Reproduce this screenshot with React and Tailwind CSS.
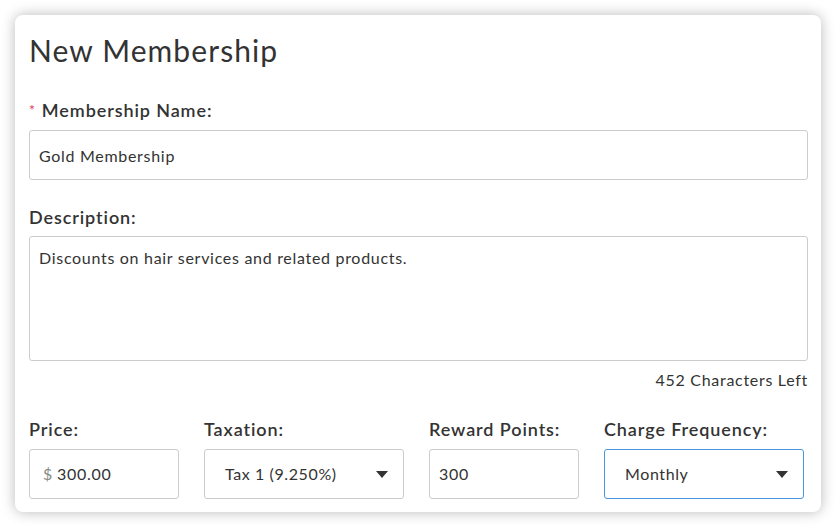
import { useState } from "react";

const Label = ({ children, required, className = "" }) => (
  <div className={`text-[18px] leading-6 font-semibold tracking-[0.9px] text-[#333] ${className}`}>
    {required && <span className="text-[#e0506b] text-[14px] align-top mr-1.5">*</span>}
    {children}
  </div>
);

const Caret = () => (
  <svg width="12" height="7" viewBox="0 0 12 7" className="shrink-0">
    <path d="M0 0 L12 0 L6 7 Z" fill="#333" />
  </svg>
);

const SelectBox = ({ value, focused }) => (
  <div
    className={`h-[50px] w-[200px] rounded-[3px] border bg-white flex items-center justify-between pl-5 pr-[15px] text-[16px] tracking-[0.6px] text-[#333] ${
      focused ? "border-[#4a95e0]" : "border-[#cccccc]"
    }`}
  >
    <span>{value}</span>
    <Caret />
  </div>
);

export default function App() {
  const [name, setName] = useState("Gold Membership");
  const [desc, setDesc] = useState("Discounts on hair services and related products.");

  return (
    <div className="w-[836px] h-[527px] bg-white pt-[15px] pl-[15px]" style={{ fontFamily: "Lato, 'Open Sans', sans-serif" }}>
      <div className="w-[806px] h-[497px] rounded-lg bg-white shadow-[0_0_14px_rgba(0,0,0,0.28)] px-[14px] pt-[17px] pb-[13px]">
        <h1 className="text-[30px] leading-9 font-normal text-[#333] tracking-[1.1px]">New Membership</h1>

        <Label required className="mt-[30px]">Membership Name:</Label>
        <input
          value={name}
          onChange={(e) => setName(e.target.value)}
          className="mt-2 block w-[779px] h-[50px] rounded-[3px] border border-[#cccccc] px-[9px] text-[16px] tracking-[0.7px] text-[#333] outline-none"
        />

        <Label className="mt-[25px]">Description:</Label>
        <textarea
          value={desc}
          onChange={(e) => setDesc(e.target.value)}
          className="mt-[7px] block w-[779px] h-[125px] resize-none rounded-[3px] border border-[#cccccc] px-[9px] py-[11px] text-[16px] leading-5 tracking-[0.7px] text-[#333] outline-none"
        />
        <div className="mt-[9px] w-[779px] text-right text-[16px] leading-5 tracking-[0.7px] text-[#333]">452 Characters Left</div>

        {/* bottom row */}
        <div className="mt-[27px] flex gap-[25px]">
          <div>
            <Label>Price:</Label>
            <div className="mt-2 h-[50px] w-[150px] rounded-[3px] border border-[#cccccc] flex items-center pl-[13px] text-[16px] tracking-[0.7px] text-[#333]">
              <span className="text-[#888] mr-1">$</span>
              300.00
            </div>
          </div>
          <div>
            <Label>Taxation:</Label>
            <div className="mt-2">
              <SelectBox value="Tax 1 (9.250%)" />
            </div>
          </div>
          <div>
            <Label>Reward Points:</Label>
            <div className="mt-2 h-[50px] w-[150px] rounded-[3px] border border-[#cccccc] flex items-center pl-[9px] text-[16px] tracking-[0.7px] text-[#333]">
              300
            </div>
          </div>
          <div>
            <Label>Charge Frequency:</Label>
            <div className="mt-2">
              <SelectBox value="Monthly" focused />
            </div>
          </div>
        </div>
      </div>
    </div>
  );
}
